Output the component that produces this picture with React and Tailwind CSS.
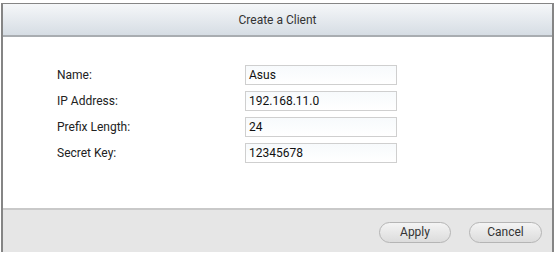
export default function App() {
  const fields = [
    { label: 'Name:', value: 'Asus' },
    { label: 'IP Address:', value: '192.168.11.0' },
    { label: 'Prefix Length:', value: '24' },
    { label: 'Secret Key:', value: '12345678' },
  ]

  return (
    <div className="w-[558px] h-[254px] bg-white overflow-hidden" style={{ fontFamily: 'Roboto, "Liberation Sans", Arial, sans-serif' }}>
      <div className="mt-[3px] ml-[1px] w-[553px] h-[249px] border-l-2 border-r-2 border-t border-[#858585] flex flex-col">
        <div className="h-[33px] shrink-0 bg-gradient-to-b from-[#f5f7f9] to-[#d6dde4] border-b-2 border-[#a9adb1] flex items-center justify-center">
          <span className="text-[12px] text-[#333]">Create a Client</span>
        </div>

        <div className="flex-1 bg-white pt-[28px] pl-[54px] flex flex-col gap-[6px]">
          {fields.map((f) => (
            <div key={f.label} className="flex items-center h-[20px]">
              <label className="w-[188px] text-[12px] text-[#222]">{f.label}</label>
              <div className="w-[152px] h-[20px] border border-[#cfcfcf] bg-gradient-to-b from-[#f7fafc] to-white flex items-center pl-[3px] text-[12px] text-[#111]">
                {f.value}
              </div>
            </div>
          ))}
        </div>

        <div className="h-[44px] shrink-0 border-t-2 border-[#c9c9c9] bg-[#e6e6e6] flex items-center justify-end gap-[18px] pr-[10px] pt-[2px]">
          <button className="w-[72px] h-[21px] rounded-full border border-[#b5b5b5] bg-gradient-to-b from-[#f4f4f4] to-[#dcdcdc] text-[12px] text-[#333]">
            Apply
          </button>
          <button className="w-[73px] h-[21px] rounded-full border border-[#b5b5b5] bg-gradient-to-b from-[#f4f4f4] to-[#dcdcdc] text-[12px] text-[#333]">
            Cancel
          </button>
        </div>
      </div>
    </div>
  )
}
